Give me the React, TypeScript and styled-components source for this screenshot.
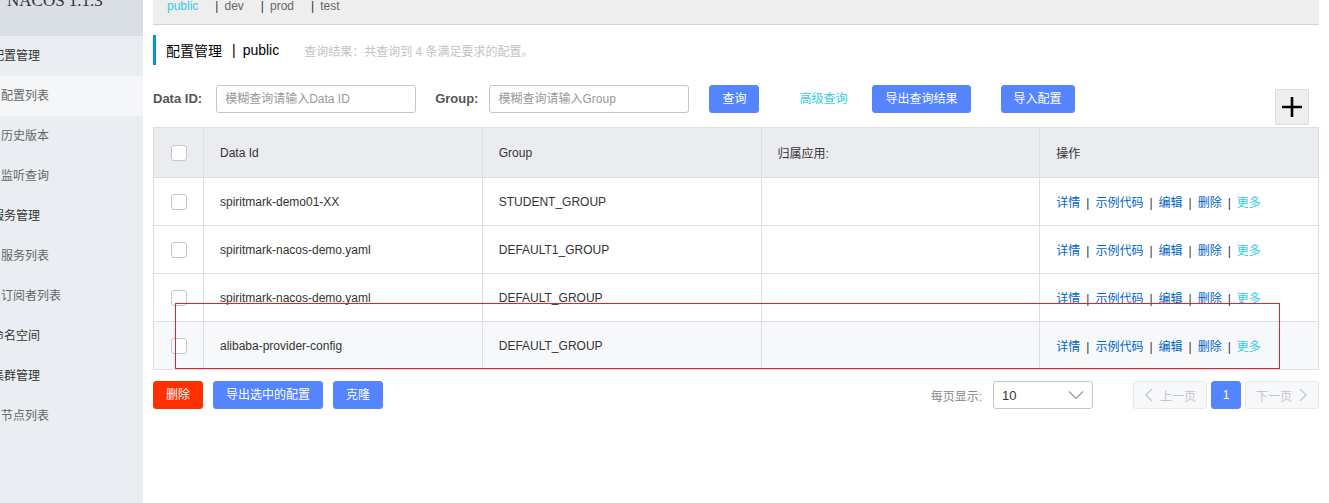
import styled, { createGlobalStyle } from "styled-components";

const GlobalStyle = createGlobalStyle`
  html, body {
    margin: 0;
    padding: 0;
    background: #fff;
    overflow: hidden;
  }
  body {
    font-family: "Liberation Sans", "Noto Sans CJK SC", Arial, sans-serif;
    font-size: 12px;
    color: #333;
  }
`;

const sideMenu = [
  { label: "配置管理", group: true },
  { label: "配置列表", active: true },
  { label: "历史版本" },
  { label: "监听查询" },
  { label: "服务管理", group: true },
  { label: "服务列表" },
  { label: "订阅者列表" },
  { label: "命名空间", group: true },
  { label: "集群管理", group: true },
  { label: "节点列表" },
];

const namespaces = ["public", "dev", "prod", "test"];

const rows = [
  { id: "spiritmark-demo01-XX", group: "STUDENT_GROUP" },
  { id: "spiritmark-nacos-demo.yaml", group: "DEFAULT1_GROUP" },
  { id: "spiritmark-nacos-demo.yaml", group: "DEFAULT_GROUP" },
  { id: "alibaba-provider-config", group: "DEFAULT_GROUP", hover: true },
];

const ops = ["详情", "示例代码", "编辑", "删除"];

const App = () => {
  return (
    <>
      <GlobalStyle />
      <Page>
        <Sidebar>
          <Brand>
            <BrandText>NACOS 1.1.3</BrandText>
          </Brand>
          {sideMenu.map((item) => (
            <MenuItem key={item.label} $group={item.group} $active={item.active}>
              {item.label}
            </MenuItem>
          ))}
        </Sidebar>

        <Main>
          <NamespaceBar>
            {namespaces.map((ns, i) => (
              <NsItem key={ns} $active={i === 0}>
                {i > 0 && <NsSep>|</NsSep>}
                {ns}
              </NsItem>
            ))}
          </NamespaceBar>

          <TitleBar>
            <TitleText>配置管理</TitleText>
            <TitleSep>|</TitleSep>
            <TitleText>public</TitleText>
            <QueryResult>查询结果：共查询到 4 条满足要求的配置。</QueryResult>
          </TitleBar>

          <SearchRow>
            <FieldLabel $mr={14}>Data ID:</FieldLabel>
            <SearchInput placeholder="模糊查询请输入Data ID" />
            <FieldLabel $ml={19} $mr={11}>
              Group:
            </FieldLabel>
            <SearchInput placeholder="模糊查询请输入Group" />
            <Button $ml={20}>查询</Button>
            <TextLink>高级查询</TextLink>
            <Button $ml={25}>导出查询结果</Button>
            <Button $ml={30}>导入配置</Button>
            <PlusButton aria-label="新建配置">
              <svg width="22" height="22" viewBox="0 0 22 22">
                <path d="M11 1 V21 M1 11 H21" stroke="#000" strokeWidth="2.6" />
              </svg>
            </PlusButton>
          </SearchRow>

          <TableWrap>
            <Table>
              <colgroup>
                <col style={{ width: 50 }} />
                <col />
                <col />
                <col />
                <col />
              </colgroup>
              <thead>
                <tr>
                  <Th $center>
                    <Checkbox />
                  </Th>
                  <Th>Data Id</Th>
                  <Th>Group</Th>
                  <Th>归属应用:</Th>
                  <Th>操作</Th>
                </tr>
              </thead>
              <tbody>
                {rows.map((row, i) => (
                  <Tr key={i} $hover={row.hover}>
                    <Td $center>
                      <Checkbox />
                    </Td>
                    <Td>{row.id}</Td>
                    <Td>{row.group}</Td>
                    <Td />
                    <Td>
                      {ops.map((op) => (
                        <span key={op}>
                          <OpLink>{op}</OpLink>
                          <OpSep>|</OpSep>
                        </span>
                      ))}
                      <OpLink $more>更多</OpLink>
                    </Td>
                  </Tr>
                ))}
              </tbody>
            </Table>
            <Annotation />
          </TableWrap>

          <Footer>
            <Button $danger>删除</Button>
            <Button $ml={10}>导出选中的配置</Button>
            <Button $ml={10}>克隆</Button>
            <Pager>
              <PagerLabel>每页显示:</PagerLabel>
              <Select>
                <span>10</span>
                <svg width="16" height="10" viewBox="0 0 16 10">
                  <path d="M1 1.5 L8 8.5 L15 1.5" fill="none" stroke="#999" strokeWidth="1.2" />
                </svg>
              </Select>
              <PageButton $ml={40} $w={74}>
                <svg width="10" height="14" viewBox="0 0 10 14">
                  <path d="M8 1 L2 7 L8 13" fill="none" stroke="#c4c6cf" strokeWidth="1.3" />
                </svg>
                上一页
              </PageButton>
              <PageButton $ml={4} $w={30} $current>
                1
              </PageButton>
              <PageButton $ml={4} $w={74}>
                下一页
                <svg width="10" height="14" viewBox="0 0 10 14">
                  <path d="M2 1 L8 7 L2 13" fill="none" stroke="#c4c6cf" strokeWidth="1.3" />
                </svg>
              </PageButton>
            </Pager>
          </Footer>
        </Main>
      </Page>
    </>
  );
};

export default App;

const Page = styled.div`
  display: flex;
  width: 1329px;
  height: 503px;
  overflow: hidden;
`;

const Sidebar = styled.aside`
  width: 143px;
  flex-shrink: 0;
  background: #eaedf1;
  overflow: hidden;
`;

const Brand = styled.div`
  height: 36px;
  background: #dadee5;
  overflow: hidden;
`;

const BrandText = styled.div`
  margin-top: -8px;
  padding-left: 7px;
  font-family: "Liberation Serif", "Times New Roman", serif;
  font-size: 17px;
  line-height: 17px;
  color: #333;
  white-space: nowrap;
`;

const MenuItem = styled.div<{ $group?: boolean; $active?: boolean }>`
  height: 40px;
  line-height: 40px;
  font-size: 12px;
  white-space: nowrap;
  text-indent: ${({ $group }) => ($group ? "-8px" : "1px")};
  color: ${({ $group }) => ($group ? "#333" : "#666")};
  background: ${({ $active }) => ($active ? "#f4f6f8" : "transparent")};
`;

const Main = styled.main`
  flex: 1;
  padding: 0 10px;
  min-width: 0;
`;

const NamespaceBar = styled.div`
  height: 24px;
  border-bottom: 1px solid #d4d4d4;
  background: #eeeeee;
  padding-left: 14px;
  display: flex;
  align-items: flex-start;
  font-size: 12px;
  line-height: 12px;
`;

const NsItem = styled.span<{ $active?: boolean }>`
  margin-right: 17px;
  color: ${({ $active }) => ($active ? "#33cde5" : "#666")};
`;

const NsSep = styled.span`
  color: #333;
  margin-right: 6px;
`;

const TitleBar = styled.div`
  margin-top: 10px;
  height: 30px;
  border-left: 3px solid #09c;
  padding-left: 10px;
  display: flex;
  align-items: center;
`;

const TitleText = styled.span`
  font-size: 14px;
  color: #000;
`;

const TitleSep = styled.span`
  font-size: 14px;
  color: #000;
  margin: 0 7px 0 10px;
`;

const QueryResult = styled.span`
  margin-left: 25px;
  font-size: 12px;
  color: #c3c3c3;
`;

const SearchRow = styled.div`
  margin-top: 20px;
  display: flex;
  align-items: flex-start;
  height: 40px;
`;

const FieldLabel = styled.label<{ $ml?: number; $mr?: number }>`
  margin-left: ${({ $ml }) => $ml || 0}px;
  margin-right: ${({ $mr }) => $mr ?? 12}px;
  height: 28px;
  line-height: 28px;
  font-size: 13px;
  font-weight: 700;
  color: #555;
`;

const SearchInput = styled.input`
  box-sizing: border-box;
  width: 200px;
  height: 28px;
  border: 1px solid #c4c6cf;
  border-radius: 3px;
  padding: 0 8px;
  font-family: inherit;
  font-size: 12px;
  color: #333;
  outline: none;

  &::placeholder {
    color: #999;
  }
`;

const Button = styled.button<{ $ml?: number; $danger?: boolean }>`
  margin-left: ${({ $ml }) => $ml || 0}px;
  height: 28px;
  padding: 0 12px;
  border: 1px solid ${({ $danger }) => ($danger ? "#ff3000" : "#5584ff")};
  border-radius: 3px;
  background: ${({ $danger }) => ($danger ? "#ff3000" : "#5584ff")};
  color: #fff;
  font-family: inherit;
  font-size: 12px;
  line-height: 26px;
  white-space: nowrap;
  cursor: pointer;
`;

const TextLink = styled.span`
  margin-left: 40px;
  height: 28px;
  line-height: 28px;
  font-size: 12px;
  color: #33cde5;
  cursor: pointer;
`;

const PlusButton = styled.div`
  margin-left: auto;
  margin-right: 10px;
  margin-top: 4px;
  box-sizing: border-box;
  width: 34px;
  height: 36px;
  background: #eeeeee;
  border: 1px solid #dddddd;
  display: flex;
  align-items: center;
  justify-content: center;
  cursor: pointer;
`;

const TableWrap = styled.div`
  position: relative;
  margin-top: 2px;
`;

const Table = styled.table`
  width: 100%;
  table-layout: fixed;
  border-collapse: collapse;
  border: 1px solid #dcdee3;
  font-size: 12px;
  color: #333;
`;

const Th = styled.th<{ $center?: boolean }>`
  height: 49px;
  padding: 0 ${({ $center }) => ($center ? "0" : "16px")};
  background: #ebecf0;
  border: 1px solid #dcdee3;
  font-weight: 400;
  text-align: ${({ $center }) => ($center ? "center" : "left")};
  vertical-align: middle;
`;

const Tr = styled.tr<{ $hover?: boolean }>`
  background: ${({ $hover }) => ($hover ? "#f7f8fa" : "#fff")};
`;

const Td = styled.td<{ $center?: boolean }>`
  height: 47px;
  padding: 0 ${({ $center }) => ($center ? "0" : "16px")};
  border: 1px solid #dcdee3;
  text-align: ${({ $center }) => ($center ? "center" : "left")};
  vertical-align: middle;
  white-space: nowrap;
  overflow: hidden;
`;

const Checkbox = styled.span`
  display: inline-block;
  vertical-align: middle;
  box-sizing: border-box;
  width: 16px;
  height: 16px;
  border: 1px solid #c4c6cf;
  border-radius: 3px;
  background: #fff;
`;

const OpLink = styled.a<{ $more?: boolean }>`
  color: ${({ $more }) => ($more ? "#33cde5" : "#0064c8")};
  text-decoration: none;
  cursor: pointer;
`;

const OpSep = styled.span`
  margin: 0 6px;
  color: #333;
`;

const Annotation = styled.div`
  position: absolute;
  left: 22px;
  top: 176px;
  width: 1105px;
  height: 66px;
  box-sizing: border-box;
  border: 1px solid #e0242b;
  pointer-events: none;
`;

const Footer = styled.div`
  margin-top: 11px;
  display: flex;
  align-items: center;
`;

const Pager = styled.div`
  margin-left: auto;
  display: flex;
  align-items: center;
`;

const PagerLabel = styled.span`
  margin-right: 11px;
  font-size: 12px;
  color: #888;
`;

const Select = styled.div`
  box-sizing: border-box;
  width: 100px;
  height: 28px;
  border: 1px solid #c4c6cf;
  border-radius: 3px;
  padding: 0 8px;
  display: flex;
  align-items: center;
  justify-content: space-between;
  font-size: 13px;
  color: #333;
`;

const PageButton = styled.div<{ $ml?: number; $w: number; $current?: boolean }>`
  margin-left: ${({ $ml }) => $ml || 0}px;
  box-sizing: border-box;
  width: ${({ $w }) => $w}px;
  height: 28px;
  border: 1px solid ${({ $current }) => ($current ? "#5584ff" : "#e6e7eb")};
  border-radius: 3px;
  background: ${({ $current }) => ($current ? "#5584ff" : "#f7f8fa")};
  color: ${({ $current }) => ($current ? "#fff" : "#c4c6cf")};
  display: flex;
  align-items: center;
  justify-content: center;
  gap: 6px;
  font-size: 12px;
`;
